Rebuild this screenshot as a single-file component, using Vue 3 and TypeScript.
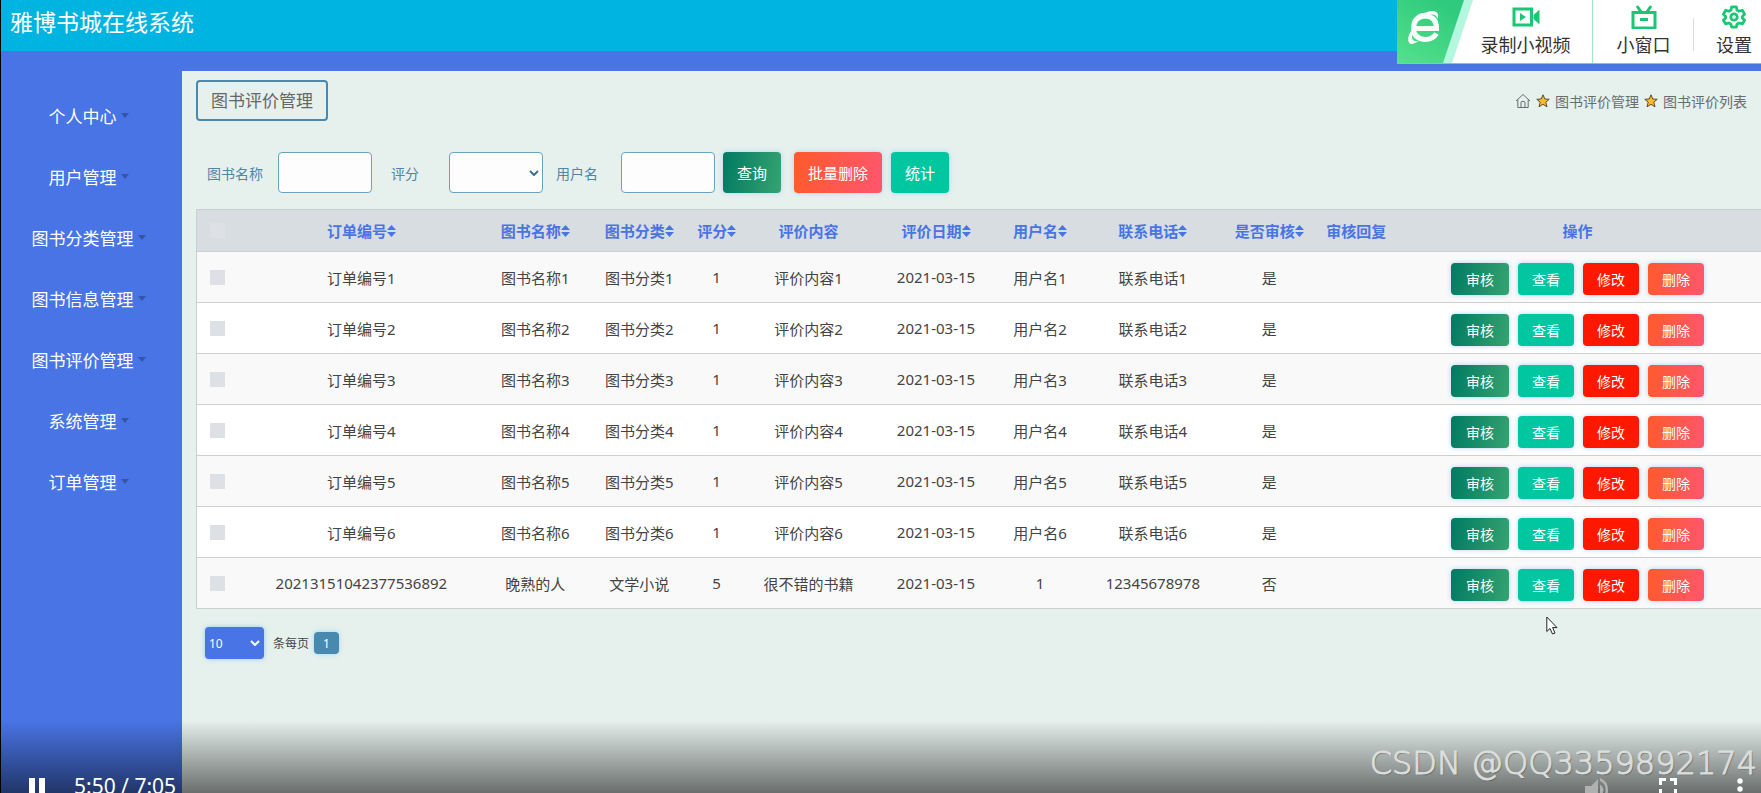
<script setup lang="ts">
import { ref } from 'vue'

interface Review {
  order: string
  book: string
  category: string
  score: string
  content: string
  date: string
  user: string
  phone: string
  audited: string
  reply: string
}

interface Column {
  key: keyof Review
  label: string
  sortable: boolean
  weight: number
}

const menu: string[] = ['个人中心', '用户管理', '图书分类管理', '图书信息管理', '图书评价管理', '系统管理', '订单管理']

const columns: Column[] = [
  { key: 'order', label: '订单编号', sortable: true, weight: 249 },
  { key: 'book', label: '图书名称', sortable: true, weight: 99 },
  { key: 'category', label: '图书分类', sortable: true, weight: 109 },
  { key: 'score', label: '评分', sortable: true, weight: 46 },
  { key: 'content', label: '评价内容', sortable: false, weight: 138 },
  { key: 'date', label: '评价日期', sortable: true, weight: 117 },
  { key: 'user', label: '用户名', sortable: true, weight: 91 },
  { key: 'phone', label: '联系电话', sortable: true, weight: 135 },
  { key: 'audited', label: '是否审核', sortable: true, weight: 98 },
  { key: 'reply', label: '审核回复', sortable: false, weight: 76 },
]
const checkWeight = 40
const actionWeight = 367
const totalWeight = columns.reduce((sum, c) => sum + c.weight, checkWeight + actionWeight)
const share = (weight: number) => ({ width: `${(weight / totalWeight) * 100}%` })

const rows: Review[] = [1, 2, 3, 4, 5, 6].map((n) => ({
  order: `订单编号${n}`,
  book: `图书名称${n}`,
  category: `图书分类${n}`,
  score: '1',
  content: `评价内容${n}`,
  date: '2021-03-15',
  user: `用户名${n}`,
  phone: `联系电话${n}`,
  audited: '是',
  reply: '',
}))
rows.push({
  order: '20213151042377536892',
  book: '晚熟的人',
  category: '文学小说',
  score: '5',
  content: '很不错的书籍',
  date: '2021-03-15',
  user: '1',
  phone: '12345678978',
  audited: '否',
  reply: '',
})

const bookName = ref('')
const score = ref('')
const userName = ref('')
const pageSize = ref('10')
</script>

<template>
  <div class="page">
    <header class="topbar"><h1>雅博书城在线系统</h1></header>

    <div class="body">
      <nav class="sidebar">
        <button v-for="item in menu" :key="item" type="button" class="menu-item">
          {{ item }}<span class="caret"></span>
        </button>
      </nav>

      <main class="content">
        <div class="heading-row">
          <h2>图书评价管理</h2>
          <div class="breadcrumb">
            <svg class="home" viewBox="0 0 16 16" fill="none" stroke="#666d70" stroke-width="1">
              <path d="M1 8 8 1.5 15 8M2.8 6.5V14.5H13.2V6.5M6 14.5V9.5Q6 8.5 7 8.5H9Q10 8.5 10 9.5V14.5" />
            </svg>
            <svg class="star" viewBox="0 0 14 14"><path d="M7 .8 8.8 5 13.2 5.3 9.8 8.2 11 12.8 7 10.3 3 12.8 4.2 8.2 .8 5.3 5.2 5Z" fill="#fcb92c" stroke="#5b4c2b" stroke-width="1" /></svg>
            <a href="#">图书评价管理</a>
            <svg class="star" viewBox="0 0 14 14"><path d="M7 .8 8.8 5 13.2 5.3 9.8 8.2 11 12.8 7 10.3 3 12.8 4.2 8.2 .8 5.3 5.2 5Z" fill="#fcb92c" stroke="#5b4c2b" stroke-width="1" /></svg>
            <span>图书评价列表</span>
          </div>
        </div>

        <form class="filters" @submit.prevent>
          <label class="label-book" for="book">图书名称</label>
          <input id="book" v-model="bookName" type="text" />
          <label class="label-score" for="score">评分</label>
          <div class="select-wrap">
            <select id="score" v-model="score">
              <option value=""></option>
              <option value="1">1</option>
              <option value="5">5</option>
            </select>
            <svg viewBox="0 0 10 6"><path d="M1 1 5 5 9 1" fill="none" stroke="#3d7190" stroke-width="2" /></svg>
          </div>
          <label class="label-user" for="user">用户名</label>
          <input id="user" v-model="userName" type="text" />
          <button type="submit" class="btn tall green search">查询</button>
          <button type="button" class="btn tall coral">批量删除</button>
          <button type="button" class="btn tall teal">统计</button>
        </form>

        <table>
          <colgroup>
            <col :style="share(checkWeight)" />
            <col v-for="c in columns" :key="c.key" :style="share(c.weight)" />
            <col :style="share(actionWeight)" />
          </colgroup>
          <thead>
            <tr>
              <th class="pick"><input type="checkbox" aria-label="全选" /></th>
              <th v-for="c in columns" :key="c.key">
                {{ c.label }}<svg v-if="c.sortable" class="sort" viewBox="0 0 9 12"><path d="M0 5 4.5 0 9 5ZM0 7H9L4.500 12Z" fill="#4974e5" /></svg>
              </th>
              <th>操作</th>
            </tr>
          </thead>
          <tbody>
            <tr v-for="row in rows" :key="row.order">
              <td class="pick"><input type="checkbox" :aria-label="row.order" /></td>
              <td v-for="c in columns" :key="c.key">{{ row[c.key] }}</td>
              <td class="actions">
                <div>
                  <button type="button" class="btn green">审核</button>
                  <button type="button" class="btn small teal">查看</button>
                  <button type="button" class="btn small red">修改</button>
                  <button type="button" class="btn small coral">删除</button>
                </div>
              </td>
            </tr>
          </tbody>
        </table>

        <div class="pager">
          <div class="select-wrap">
            <select id="size" v-model="pageSize">
              <option value="10">10</option>
              <option value="25">25</option>
            </select>
            <svg viewBox="0 0 10 6"><path d="M1 1 5 5 9 1" fill="none" stroke="#fff" stroke-width="2" /></svg>
          </div>
          <label for="size">条每页</label>
          <button type="button" class="page-no">1</button>
        </div>
      </main>
    </div>

    <aside class="recorder">
      <svg class="brand" viewBox="0 0 76 63">
        <defs>
          <linearGradient id="brand-fill" x1="0" y1="1" x2="0.6" y2="0">
            <stop offset="0" stop-color="#55e18c" />
            <stop offset="1" stop-color="#2fca7d" />
          </linearGradient>
        </defs>
        <path d="M0 0H69L47 63H0Z" fill="url(#brand-fill)" />
        <path d="M67 0H76L55 63H46Z" fill="#b4f7df" />
        <path d="M39.500 33.500Q36 39.500 28 39.500Q16.500 38.500 16.500 28Q17 16.500 28.500 16Q39.500 16.500 39.500 28.500H18" fill="none" stroke="#f8fffb" stroke-width="5" />
        <path d="M14 31Q9 39 12.500 43.500Q16 45 22 41Q17 42 15.500 39.500Q14.500 37 15.500 34ZM14.500 23Q18 13 29 12.500Q37 9.500 40.500 13Q42 16 40.500 19Q39.500 14 34 14.500L27 16Q19 16.500 14.500 23Z" fill="#f8fffb" />
      </svg>
      <button type="button" class="tool record">
        <svg viewBox="0 0 28 22"><path d="M2 3H19.500V19H2Z" fill="none" stroke="#1bc774" stroke-width="3" /><path d="M8 7 14 11 8 15Z M21.500 9 27.500 3.500V18.500L21.500 13Z" fill="#1bc774" /></svg>
        录制小视频
      </button>
      <button type="button" class="tool mini">
        <svg viewBox="0 0 28 24"><path d="M3 7.500H25V23H3ZM7 1 11 7M21 1 17 7M10 14.500H18" fill="none" stroke="#1bc774" stroke-width="3" /></svg>
        小窗口
      </button>
      <button type="button" class="tool settings">
        <svg viewBox="0 0 26 26" fill="none" stroke="#1bc774" stroke-width="3" stroke-linejoin="round"><path d="M10.500 2H15.500L16.300 5.500 18.500 6.800 22 5.700 24.500 10 22 12.500V14L24.500 16.500 22 20.500 18.500 19.500 16.300 20.800 15.500 24H10.500L9.700 20.800 7.500 19.500 4 20.500 1.500 16.500 4 14V12.500L1.500 10 4 5.700 7.500 6.800 9.700 5.500Z" /><circle cx="13" cy="13" r="3.500" /></svg>
        设置
      </button>
    </aside>

    <svg class="cursor" viewBox="0 0 12 19"><path d="M.8 1V15.500L4 12.500 6.500 18 9 17 6.600 11.600H11Z" fill="#fff" stroke="#20242c" stroke-width="1" /></svg>

    <div class="player">
      <button type="button" aria-label="暂停" class="icon-btn pause">
        <svg viewBox="0 0 16 22"><path d="M0 0H6V22H0ZM10 0H16V22H10Z" fill="#fff" /></svg>
      </button>
      <span class="time">5:50 / 7:05</span>
      <button type="button" aria-label="音量" class="icon-btn volume">
        <svg viewBox="0 0 24 24"><path d="M0 8H6L13 1V23L6 16H0Z" fill="#aeb1b0" /><path d="M15 6.500Q18.500 8.500 18.500 12T15 17.500ZM15 0Q23 3 23 12T15 24V21.500Q20.500 18.500 20.500 12T15 3Z" fill="#aeb1b0" /></svg>
      </button>
      <button type="button" aria-label="全屏" class="icon-btn full">
        <svg viewBox="0 0 18 18"><path d="M1.500 7V1.500H7M11 1.500H16.500V7M16.500 11V16.500H11M7 16.500H1.500V11" fill="none" stroke="#fff" stroke-width="3" /></svg>
      </button>
      <button type="button" aria-label="更多" class="icon-btn more">
        <svg viewBox="0 0 6 22"><circle cx="3" cy="3" r="2.700" fill="#fff" /><circle cx="3" cy="11" r="2.700" fill="#fff" /><circle cx="3" cy="19" r="2.700" fill="#fff" /></svg>
      </button>
    </div>
    <div class="watermark">CSDN @QQ3359892174</div>
  </div>
</template>

<style>
body {
  margin: 0;
}
</style>

<style scoped>
.page {
  position: relative;
  box-sizing: border-box;
  display: flex;
  flex-direction: column;
  height: 100vh;
  overflow: hidden;
  border-left: 1px solid #000;
  background: #4974e5;
  color: #444;
  font-family: "Noto Sans", "Noto Sans CJK SC", sans-serif;
  font-size: 15px;
}
button,
input,
select {
  box-sizing: border-box;
  margin: 0;
  padding: 0;
  border: none;
  font-family: inherit;
}
svg {
  display: block;
  flex: none;
}
.topbar {
  flex: none;
  display: flex;
  height: 51px;
  padding-left: 9px;
  background: #00b4e2;
}
.topbar h1 {
  margin: 0;
  color: #fff;
  font-size: 23px;
  line-height: 44px;
  font-weight: 400;
}
.body {
  flex: 1;
  display: flex;
  padding-top: 20px;
}
.sidebar {
  flex: none;
  box-sizing: border-box;
  width: 181px;
  padding: 14px 6px 0 0;
  display: flex;
  flex-direction: column;
}
.menu-item {
  display: flex;
  align-items: center;
  justify-content: center;
  gap: 4px;
  height: 61px;
  background: none;
  color: #fff;
  font-size: 17px;
}
.caret {
  border: 4px solid transparent;
  border-top: 5px solid #3555a8;
  border-bottom: 0;
}
.content {
  flex: 1;
  min-width: 0;
  padding: 9px 0 0 14px;
  background: #e6f0ed;
}
.heading-row {
  display: flex;
  justify-content: space-between;
  align-items: center;
  padding-right: 14px;
}
h2 {
  margin: 0;
  padding: 0 13px;
  border: 2px solid #4889b0;
  border-radius: 4px;
  color: #666;
  font-size: 17px;
  line-height: 37px;
  font-weight: 400;
}
.breadcrumb {
  display: flex;
  align-items: center;
  gap: 5px;
  color: #666d70;
  font-size: 14px;
}
.breadcrumb a {
  color: inherit;
  text-decoration: none;
}
.home {
  width: 16px;
  height: 16px;
}
.star {
  width: 14px;
  height: 14px;
}
.filters {
  display: flex;
  align-items: center;
  margin: 31px 0 16px;
  color: #4d86a8;
  font-size: 14px;
}
.label-book {
  width: 71px;
  margin-left: 11px;
}
.label-score {
  width: 58px;
  margin-left: 19px;
}
.label-user {
  width: 65px;
  margin-left: 13px;
}
.filters input,
.filters select {
  width: 94px;
  height: 41px;
  padding: 0 10px;
  border: 1px solid #6ba2c0;
  border-radius: 4px;
  background: #fcfdfc;
}
.select-wrap {
  position: relative;
}
.select-wrap select {
  display: block;
  appearance: none;
}
.select-wrap svg {
  position: absolute;
  right: 4px;
  top: calc(50% - 3px);
  width: 10px;
  height: 6px;
  pointer-events: none;
}
.btn {
  width: 58px;
  height: 32px;
  border-radius: 4px;
  color: #fff;
  font-size: 14px;
  box-shadow: 0 0 5px #b0d4f4;
}
.tall {
  width: auto;
  height: 41px;
  padding: 0 14px;
  margin-right: 9px;
  font-size: 15px;
}
.search {
  margin: 0 13px 0 8px;
}
.small {
  width: 56px;
}
.green {
  background: linear-gradient(100deg, #007a62, #36a370);
}
.teal {
  background: #00c7a0;
}
.red {
  background: #ff1800;
}
.coral {
  background: linear-gradient(100deg, #ff5a2c, #ff566e);
}
table {
  width: 100%;
  table-layout: fixed;
  border-collapse: separate;
  border-spacing: 0;
  border: 1px solid #c8d0d1;
  border-right: none;
  border-bottom: none;
}
th,
td {
  padding: 0;
  border-bottom: 1px solid #cdd0d2;
  text-align: center;
  white-space: nowrap;
}
th {
  height: 41px;
  background: #d7dde1;
  color: #4974e5;
  font-weight: 700;
}
td {
  height: 50px;
  background: #fff;
}
tbody tr:nth-child(odd) td {
  background: #f9f9f9;
}
.sort {
  display: inline-block;
  width: 9px;
  height: 12px;
}
.pick input {
  appearance: none;
  display: block;
  width: 15px;
  height: 15px;
  margin-left: 13px;
  background: #dde1e6;
}
.actions div {
  display: flex;
  justify-content: center;
  gap: 9px;
  padding-top: 3px;
}
.pager {
  display: flex;
  align-items: center;
  margin: 18px 0 0 9px;
  font-size: 12px;
}
.pager select {
  width: 59px;
  height: 32px;
  padding-left: 4px;
  border-radius: 4px;
  background: #4974e5;
  color: #fff;
  font-size: 12px;
  box-shadow: 0 0 5px #90cdf4;
}
.pager label {
  margin: 0 5px 0 9px;
}
.page-no {
  width: 25px;
  height: 22px;
  border-radius: 4px;
  background: #4889b0;
  color: #fff;
  font-size: 12px;
  box-shadow: 0 0 5px #a0d8f4;
}
.recorder {
  position: absolute;
  top: 0;
  right: 0;
  display: flex;
  height: 63px;
  background: #fff;
  border-bottom: 1px solid #a3b3d8;
}
.brand {
  width: 76px;
  height: 63px;
  margin-right: -14px;
}
.tool {
  display: flex;
  flex-direction: column;
  align-items: center;
  background: none;
  color: #333;
  font-size: 18px;
  line-height: 26px;
}
.tool svg {
  width: 28px;
  height: 24px;
  margin: 5px 0 3px;
}
.record {
  width: 134px;
  border-right: 1px solid #9ee7c5;
}
.mini {
  width: 101px;
  background: linear-gradient(#ddd, #ddd) right 18px / 1px 33px no-repeat;
}
.settings {
  padding: 0 9px 0 22px;
}
.cursor {
  position: absolute;
  left: 1545px;
  top: 616px;
  width: 12px;
  height: 19px;
}
.player {
  position: absolute;
  inset: auto 0 0 0;
  box-sizing: border-box;
  display: flex;
  align-items: flex-start;
  height: 73px;
  padding: 58px 18px 0 28px;
  overflow: hidden;
  background: linear-gradient(rgba(0, 0, 0, 0), rgba(0, 0, 0, 0.54));
}
.icon-btn {
  background: none;
}
.pause svg {
  width: 16px;
  height: 22px;
}
.time {
  margin-left: 29px;
  color: #fff;
  font-size: 21px;
  line-height: 16px;
}
.volume {
  margin-left: auto;
}
.volume svg {
  width: 24px;
  height: 24px;
}
.full {
  margin: 0 60px 0 50px;
}
.full svg {
  width: 18px;
  height: 18px;
}
.more svg {
  width: 6px;
  height: 22px;
}
.watermark {
  position: absolute;
  right: 4px;
  bottom: 10px;
  color: #dcdedd;
  -webkit-text-stroke: 1px #dcdedd;
  font-family: "DejaVu Sans", sans-serif;
  font-size: 32px;
  line-height: 40px;
  font-weight: 200;
  text-shadow: 1px 1px 1px rgba(60, 64, 62, 0.6);
}
</style>
